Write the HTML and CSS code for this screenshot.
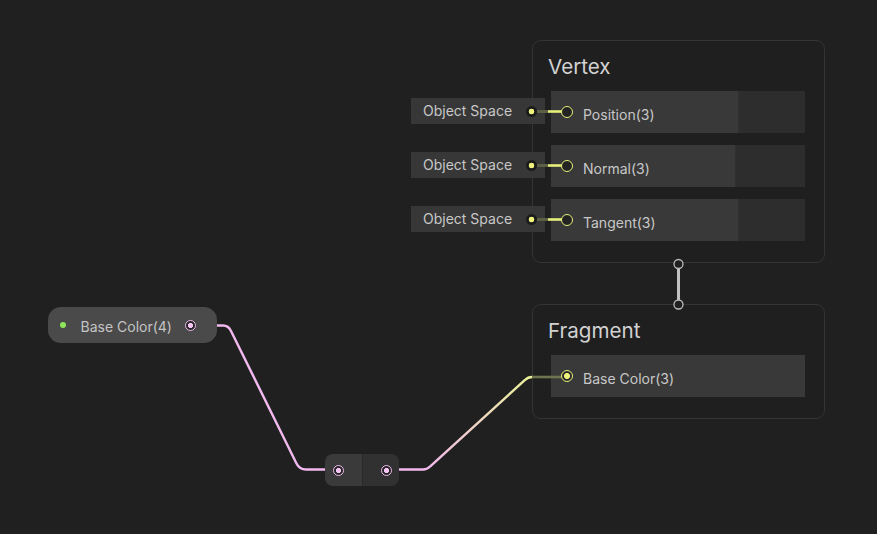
FILE: index.html
```html
<!DOCTYPE html>
<html>
<head>
<meta charset="utf-8">
<link rel="stylesheet" href="styles.css">
</head>
<body>
<div class="canvas">
  <div class="node master vertex">
    <div class="title">Vertex</div>
    <div class="slots">
      <div class="slot">
        <div class="slot-main w187"><span class="ring"></span><span class="label">Position(3)</span></div>
        <div class="slot-fill"></div>
      </div>
      <div class="slot">
        <div class="slot-main w184"><span class="ring"></span><span class="label">Normal(3)</span></div>
        <div class="slot-fill"></div>
      </div>
      <div class="slot">
        <div class="slot-main w187"><span class="ring"></span><span class="label">Tangent(3)</span></div>
        <div class="slot-fill"></div>
      </div>
    </div>
  </div>

  <div class="node master fragment">
    <div class="title">Fragment</div>
    <div class="slots">
      <div class="slot">
        <div class="slot-main full"><span class="ring filled"></span><span class="label">Base Color(3)</span></div>
      </div>
    </div>
  </div>

  <div class="inline-input in-pos"><span class="in-label">Object Space</span><span class="in-dot"></span></div>
  <div class="inline-input in-nrm"><span class="in-label">Object Space</span><span class="in-dot"></span></div>
  <div class="inline-input in-tan"><span class="in-label">Object Space</span><span class="in-dot"></span></div>

  <div class="pill">
    <span class="green-dot"></span>
    <span class="pill-label">Base Color(4)</span>
    <span class="pink-port"></span>
  </div>

  <div class="reroute">
    <div class="half left"><span class="pink-port"></span></div>
    <div class="half right"><span class="pink-port"></span></div>
  </div>

  <svg class="wires" width="877" height="534" viewBox="0 0 877 534">
    <defs>
      <linearGradient id="pk2yl" gradientUnits="userSpaceOnUse" x1="425" y1="470" x2="528" y2="378">
        <stop offset="0" stop-color="#f2b9ee"/>
        <stop offset="1" stop-color="#eaf09a"/>
      </linearGradient>
    </defs>
    <path d="M217 325.5 L223 325.5 Q228.5 325.5 231 331 L296.5 463.5 Q299.5 469.5 306 469.5 L325 469.5" fill="none" stroke="#f2b9ee" stroke-width="2.4"/>
    <path d="M399 469.5 L423 469.5 Q427 469.5 430 466.5 L525 380 Q528 377 532 377" fill="none" stroke="url(#pk2yl)" stroke-width="2.4"/>
    <path d="M532 377 L561 377" fill="none" stroke="#6f7350" stroke-width="2.6"/>
    <path d="M537 111.5 L548 111.5" stroke="#5c5f44" stroke-width="3"/>
    <path d="M548 111.5 L562 111.5" stroke="#e7f07a" stroke-width="2.6"/>
    <path d="M537 165.5 L548 165.5" stroke="#5c5f44" stroke-width="3"/>
    <path d="M548 165.5 L562 165.5" stroke="#e7f07a" stroke-width="2.6"/>
    <path d="M537 219.5 L548 219.5" stroke="#5c5f44" stroke-width="3"/>
    <path d="M548 219.5 L562 219.5" stroke="#e7f07a" stroke-width="2.6"/>
    <path d="M678.5 268 L678.5 300.5" stroke="#c2c2c2" stroke-width="3"/>
    <circle cx="678.5" cy="264" r="4.5" fill="#202020" stroke="#bcbcbc" stroke-width="1.3"/>
    <circle cx="678.5" cy="304.5" r="4.5" fill="#202020" stroke="#bcbcbc" stroke-width="1.3"/>
  </svg>
</div>
</body>
</html>
```
FILE: styles.css
```css
html, body {
  margin: 0;
  padding: 0;
  background: #202020;
}

.canvas {
  position: relative;
  width: 877px;
  height: 534px;
  overflow: hidden;
  background: #202020;
  font-family: Inter, "Noto Sans", sans-serif;
  color: #c4c4c4;
}

.wires {
  position: absolute;
  left: 0;
  top: 0;
  z-index: 1;
  pointer-events: none;
}

.node {
  position: absolute;
  box-sizing: border-box;
  width: 293px;
  background: #1f1f1f;
  border: 1px solid #343434;
  border-radius: 9px;
  padding: 0 19px 21px 18px;
  display: flex;
  flex-direction: column;
}

.vertex { left: 532px; top: 40px; }
.fragment { left: 532px; top: 304px; }

.title {
  box-sizing: border-box;
  height: 50px;
  padding-top: 14px;
  font-size: 20.6px;
  line-height: 24px;
  color: #d2d2d2;
  margin-left: -3px;
}

.slots {
  display: flex;
  flex-direction: column;
  gap: 12px;
}

.slot {
  display: flex;
  height: 42px;
  width: 254px;
}

.slot-main {
  display: flex;
  align-items: center;
  background: #393939;
  height: 100%;
}

.w187 { width: 187px; }
.w184 { width: 184px; }
.full { width: 254px; }

.slot-fill {
  flex: 1;
  background: #2d2d2d;
  border-left: 1px solid #303030;
}

.ring {
  box-sizing: border-box;
  width: 12px;
  height: 12px;
  margin-left: 10px;
  border: 1.7px solid #e6ef7a;
  border-radius: 50%;
  background: #232323;
  flex: none;
  position: relative;
  z-index: 2;
}

.ring.filled {
  background: radial-gradient(circle, #eef27c 0 2.7px, #2a2a2a 3.3px);
}

.label {
  margin-left: 10px;
  margin-top: 5px;
  font-size: 14px;
  color: #c8c8c8;
}

.inline-input {
  position: absolute;
  left: 411px;
  box-sizing: border-box;
  width: 134px;
  height: 26px;
  background: #373737;
  display: flex;
  align-items: center;
  justify-content: space-between;
  padding: 0 8px 0 12px;
}

.in-pos { top: 98px; }
.in-nrm { top: 152px; }
.in-tan { top: 206px; }

.in-label {
  font-size: 14px;
  color: #c8c8c8;
  margin-top: -1px;
}

.in-dot {
  box-sizing: border-box;
  width: 11px;
  height: 11px;
  border-radius: 50%;
  background: radial-gradient(circle, #eef27c 0 2.6px, #1b1b1b 3.1px);
  flex: none;
  position: relative;
  z-index: 2;
}

.pill {
  position: absolute;
  left: 48px;
  top: 307px;
  box-sizing: border-box;
  width: 169px;
  height: 36px;
  border-radius: 13px;
  background: #4a4a4a;
  display: flex;
  align-items: center;
  padding: 0 21px 0 12px;
  z-index: 2;
}

.green-dot {
  width: 6px;
  height: 6px;
  border-radius: 50%;
  background: #8fe65a;
  flex: none;
}

.pill-label {
  flex: 1;
  margin-left: 14.5px;
  margin-top: 2px;
  font-size: 14px;
  color: #c4c4c4;
}

.pink-port {
  box-sizing: border-box;
  width: 11px;
  height: 11px;
  border-radius: 50%;
  border: 1.4px solid #f2b9ee;
  background: radial-gradient(circle, #f6c4f2 0 2.3px, #262626 2.9px);
  flex: none;
}

.reroute {
  position: absolute;
  left: 325px;
  top: 454px;
  width: 74px;
  height: 32px;
  border-radius: 8px;
  overflow: hidden;
  display: flex;
  z-index: 2;
}

.half {
  height: 100%;
  display: flex;
  align-items: center;
}

.half.left {
  width: 37px;
  background: #3a3a3a;
  padding-left: 8px;
  box-sizing: border-box;
}

.half.right {
  flex: 1;
  background: #313131;
  border-left: 1px solid #2a2a2a;
  justify-content: flex-end;
  padding-right: 7px;
}
```
